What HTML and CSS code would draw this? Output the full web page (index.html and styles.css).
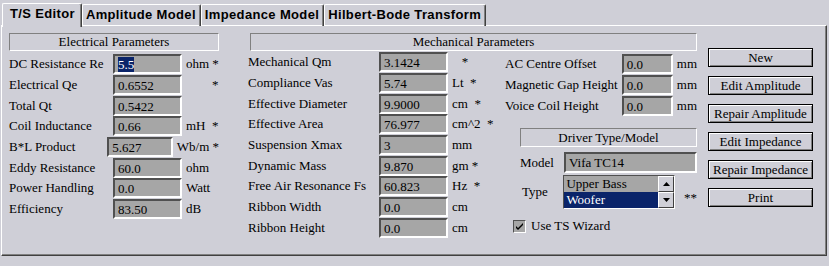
FILE: index.html
```html
<!DOCTYPE html>
<html>
    <head>
        <meta charset="utf-8">
        <title>T/S Editor</title>
        <link rel="stylesheet" href="styles.css">
    </head>
    <body>
        <div class="tabs">
            <div class="tab active">T/S Editor</div>
            <div class="tab">Amplitude Model</div>
            <div class="tab">Impedance Model</div>
            <div class="tab">Hilbert-Bode Transform</div>
        </div>
        <div class="panel">
            <!-- electrical -->
            <div class="elec">
                <div class="caption">Electrical Parameters</div>
                <div class="rows">
                    <div class="row"><span class="lbl">DC Resistance Re</span><span class="field"><span class="sel">5.5</span></span><span class="unit">ohm *</span></div>
                    <div class="row"><span class="lbl">Electrical Qe</span><span class="field">0.6552</span><span class="unit">        *</span></div>
                    <div class="row"><span class="lbl">Total Qt</span><span class="field">0.5422</span><span class="unit"></span></div>
                    <div class="row"><span class="lbl">Coil Inductance</span><span class="field">0.66</span><span class="unit">mH  *</span></div>
                    <div class="row"><span class="lbl">B*L Product</span><span class="field">5.627</span><span class="unit">Wb/m *</span></div>
                    <div class="row"><span class="lbl">Eddy Resistance</span><span class="field">60.0</span><span class="unit">ohm</span></div>
                    <div class="row"><span class="lbl">Power Handling</span><span class="field">0.0</span><span class="unit">Watt</span></div>
                    <div class="row"><span class="lbl">Efficiency</span><span class="field">83.50</span><span class="unit">dB</span></div>
                </div>
            </div>
            <!-- mechanical -->
            <div class="mech">
                <div class="caption">Mechanical Parameters</div>
                <div class="mech-body">
                    <div class="rows mid">
                        <div class="row"><span class="lbl">Mechanical Qm</span><span class="field">3.1424</span><span class="unit">   *</span></div>
                        <div class="row"><span class="lbl">Compliance Vas</span><span class="field">5.74</span><span class="unit">Lt  *</span></div>
                        <div class="row"><span class="lbl">Effective Diameter</span><span class="field">9.9000</span><span class="unit">cm  *</span></div>
                        <div class="row"><span class="lbl">Effective Area</span><span class="field">76.977</span><span class="unit">cm^2  *</span></div>
                        <div class="row"><span class="lbl">Suspension Xmax</span><span class="field">3</span><span class="unit">mm</span></div>
                        <div class="row"><span class="lbl">Dynamic Mass</span><span class="field">9.870</span><span class="unit">gm *</span></div>
                        <div class="row"><span class="lbl">Free Air Resonance Fs</span><span class="field">60.823</span><span class="unit">Hz  *</span></div>
                        <div class="row"><span class="lbl">Ribbon Width</span><span class="field">0.0</span><span class="unit">cm</span></div>
                        <div class="row"><span class="lbl">Ribbon Height</span><span class="field">0.0</span><span class="unit">cm</span></div>
                    </div>
                    <div class="side">
                        <div class="rows small">
                            <div class="row"><span class="lbl">AC Centre Offset</span><span class="field">0.0</span><span class="unit">mm</span></div>
                            <div class="row"><span class="lbl">Magnetic Gap Height</span><span class="field">0.0</span><span class="unit">mm</span></div>
                            <div class="row"><span class="lbl">Voice Coil Height</span><span class="field">0.0</span><span class="unit">mm</span></div>
                        </div>
                        <div class="caption driver">Driver Type/Model</div>
                        <div class="model-row">
                            <span class="lbl2">Model</span>
                            <span class="field model">Vifa TC14</span>
                        </div>
                        <div class="type-row">
                            <span class="lbl2">Type</span>
                            <div class="listbox">
                                <div class="item">Upper Bass</div>
                                <div class="item chosen">Woofer</div>
                                <div class="scroll">
                                    <span class="arrow"><svg width="7" height="4" viewBox="0 0 7 4"><path d="M3.5 0 L7 4 L0 4 Z" fill="#000"/></svg></span>
                                    <span class="arrow"><svg width="7" height="4" viewBox="0 0 7 4"><path d="M0 0 L7 0 L3.5 4 Z" fill="#000"/></svg></span>
                                </div>
                            </div>
                            <span class="stars">**</span>
                        </div>
                        <div class="check-row">
                            <span class="check"><svg width="9" height="9" viewBox="0 0 9 9"><path d="M1 4 L3 6 L8 1 L8 3 L3 8 L1 6 Z" fill="#000"/></svg></span>
                            <span>Use TS Wizard</span>
                        </div>
                    </div>
                </div>
            </div>
            <!-- buttons -->
            <div class="buttons">
                <div class="btn">New</div>
                <div class="btn">Edit Amplitude</div>
                <div class="btn">Repair Amplitude</div>
                <div class="btn">Edit Impedance</div>
                <div class="btn">Repair Impedance</div>
                <div class="btn">Print</div>
            </div>
        </div>
    </body>
</html>
```

FILE: styles.css
```css
body {
    margin: 0;
    width: 829px;
    height: 266px;
    background-color: #cfcfd7;
    font-family: "Liberation Serif", "Times New Roman", serif;
    font-size: 13px;
    color: #000;
    overflow: hidden;
}
.tabs {
    display: flex;
    padding: 3px 0 0 2px;
    height: 22px;
    position: relative;
    z-index: 1;
}
.tab {
    font-family: "Liberation Sans", Arial, sans-serif;
    font-weight: bold;
    font-size: 13px;
    letter-spacing: 0.35px;
    height: 21px;
    line-height: 19px;
    margin-top: 1px;
    padding: 0 4px 0 3px;
    border-top: 1px solid #fff;
    border-left: 1px solid #fff;
    border-right: 1px solid #404040;
    box-shadow: inset -1px 0 #808080;
    border-radius: 2px 2px 0 0;
}
.tab.active {
    margin-top: 0;
    height: 23px;
    line-height: 20px;
    padding: 0 6px 0 7px;
    background-color: #cfcfd7;
}
.panel {
    display: flex;
    margin: 0 2px 0 1px;
    height: 231px;
    box-sizing: border-box;
    border-top: 1px solid #fff;
    border-left: 1px solid #fff;
    border-right: 1px solid #404040;
    border-bottom: 1px solid #404040;
    box-shadow: inset -1px -1px #808080;
    padding: 7px 0 0 7px;
}
.caption {
    line-height: 16px;
    text-align: center;
    border: 1px solid;
    border-color: #808080 #fff #fff #808080;
    box-sizing: border-box;
    height: 18px;
}
.elec {
    width: 210px;
}
.elec .rows {
    margin-top: 3px;
}
.row {
    display: flex;
    align-items: center;
    height: 20.7px;
}
.lbl {
    width: 104px;
}
.field {
    box-sizing: border-box;
    width: 69px;
    height: 20px;
    line-height: 17px;
    padding-left: 3px;
    background-color: #a6a6a6;
    border: 2px solid;
    border-color: #505050 #fff #fff #505050;
    white-space: nowrap;
    overflow: hidden;
}
.sel {
    background-color: #0a246a;
    color: #fff;
}
.unit {
    margin-left: 4px;
    white-space: pre;
}
.mech {
    margin-left: 29px;
    width: 449px;
}
.mech .caption {
    margin-left: 2px;
}
.mech-body {
    display: flex;
}
.mid {
    width: 257px;
    margin-top: 1px;
}
.mid .lbl {
    width: 131px;
}
.side {
    width: 192px;
}
.small {
    margin-top: 3px;
}
.small .lbl {
    width: 119px;
}
.small .field {
    width: 52px;
}
.caption.driver {
    margin: 12px 0 0 15px;
    height: 19px;
    line-height: 17px;
}
.model-row {
    display: flex;
    align-items: center;
    margin-top: 5px;
}
.lbl2 {
    width: 44px;
    padding-left: 15px;
}
.field.model {
    width: 133px;
    height: 21px;
    line-height: 17px;
}
.type-row {
    display: flex;
    align-items: center;
    margin-top: 2px;
}
.type-row .lbl2 {
    padding-left: 17px;
    width: 42px;
}
.listbox {
    position: relative;
    box-sizing: border-box;
    width: 113px;
    height: 34px;
    background-color: #a6a6a6;
    border: 1px solid;
    border-color: #505050 #fff #fff #505050;
    padding: 0 16px 0 0;
}
.item {
    height: 16px;
    line-height: 16px;
    padding-left: 2px;
}
.item.chosen {
    background-color: #0a246a;
    color: #fff;
}
.scroll {
    position: absolute;
    right: 0;
    top: 0;
    width: 16px;
    display: flex;
    flex-direction: column;
}
.arrow {
    box-sizing: border-box;
    width: 16px;
    height: 16px;
    display: flex;
    align-items: center;
    justify-content: center;
    background-color: #cfcfd7;
    border: 1px solid;
    border-color: #fff #404040 #404040 #fff;
}
.stars {
    margin-left: 9px;
    margin-top: 12px;
}
.check-row {
    display: flex;
    align-items: center;
    margin-top: 9px;
    padding-left: 8px;
}
.check {
    box-sizing: border-box;
    width: 13px;
    height: 13px;
    border: 1px solid;
    border-color: #505050 #fff #fff #505050;
    background-color: #a6a6a6;
    display: flex;
    align-items: center;
    justify-content: center;
    margin-right: 5px;
}
.buttons {
    margin-left: 11px;
    padding-top: 15px;
    display: flex;
    flex-direction: column;
    gap: 9px;
}
.btn {
    box-sizing: border-box;
    width: 105px;
    height: 19px;
    line-height: 17px;
    text-align: center;
    border: 1px solid #000;
    box-shadow: inset 1px 1px #fff, inset -1px -1px #808080;
}
```
